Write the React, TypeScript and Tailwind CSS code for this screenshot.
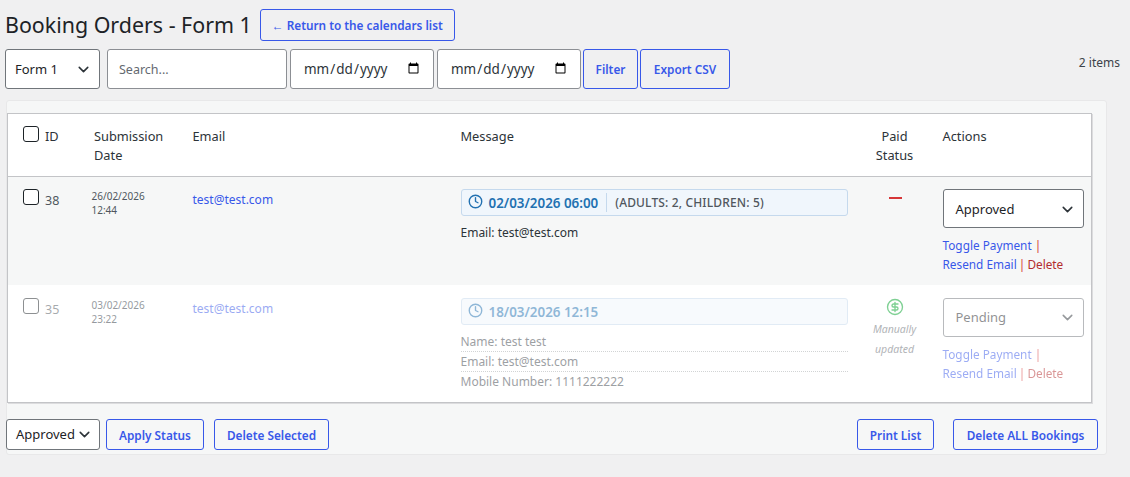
import { ChevronDown, CircleDollarSign, Clock } from "lucide-react";

const btn =
  "h-full flex items-center justify-center pt-[2px] border border-[#3858e9] rounded-[3px] text-[#3858e9] text-[11.8px] font-semibold bg-transparent";

function Select({ label, className }: { label: string; className: string }) {
  return (
    <div className={`flex items-center justify-between bg-white border border-[#70757a] rounded-[3px] text-[#1d2327] ${className}`}>
      <span className="pt-[1px]">{label}</span>
      <ChevronDown size={17} strokeWidth={2.2} className="text-[#2c3338]" />
    </div>
  );
}

function Links() {
  return (
    <div className="mt-[8px] text-[11.8px] leading-[19px] text-[#3858e9] whitespace-nowrap">
      <div>
        Toggle Payment <span className="text-[#d63638]">|</span>
      </div>
      <div>
        Resend Email <span className="text-[#d63638] -ml-[1px] -mr-[1px]">|</span>{" "}
        <span className="text-[#b32d2e]">Delete</span>
      </div>
    </div>
  );
}

function DateBadge({ date, extra }: { date: string; extra?: string }) {
  return (
    <div className="h-[27px] flex items-center border border-[#c5d9ed] bg-[#f0f6fc] rounded-[3px] pl-[6px]">
      <Clock size={15} strokeWidth={2.2} className="text-[#2271b1] -mt-[2px]" />
      <span className="ml-[6px] pt-[2px] text-[#2271b1] text-[13.4px] font-semibold">{date}</span>
      {extra && (
        <>
          <span className="ml-[8px] h-[19px] border-l border-[#c5d9ed]" />
          <span className="ml-[8px] text-[#50575e] text-[12px] font-medium tracking-[0.15px]">{extra}</span>
        </>
      )}
    </div>
  );
}

function Check() {
  return <span className="block w-[16px] h-[16px] shrink-0 bg-white border border-[#1d2327] rounded-[3px]" />;
}

export default function App() {
  return (
    <div className="w-[1130px] h-[477px] overflow-hidden bg-[#f0f0f1] text-[#2c3338] text-[12.8px] [font-family:'Noto_Sans','Open_Sans',sans-serif]">
      <div className="h-[49px] pl-[5px] flex items-center pt-[1px]">
        <h1 className="text-[21.4px] text-[#1d2327] font-normal whitespace-nowrap">Booking Orders - Form 1</h1>
        <a className={`${btn} ml-[8px] w-[195px] !h-[32px] bg-[#f6f7f7]`}>← Return to the calendars list</a>
      </div>

      <div className="h-[40px] flex pl-[5px] relative">
        <Select label="Form 1" className="w-[95px] pl-[9px] pr-[7px] mr-[7px] text-[13px]" />
        <input
          placeholder="Search..."
          className="w-[180px] h-full mr-[3px] pl-[11px] pt-[1px] bg-white border border-[#8c8f94] rounded-[3px] placeholder:text-[#646970] text-[12.5px]"
        />
        <input
          type="date"
          className="w-[144px] h-full mr-[3px] pl-[12px] pr-[11px] bg-white border border-[#8c8f94] rounded-[3px] text-[13.5px] text-[#2c3338]"
        />
        <input
          type="date"
          className="w-[144px] h-full mr-[2px] pl-[12px] pr-[11px] bg-white border border-[#8c8f94] rounded-[3px] text-[13.5px] text-[#2c3338]"
        />
        <button className={`${btn} w-[55px] mr-[2px]`}>Filter</button>
        <button className={`${btn} w-[90px]`}>Export CSV</button>
        <span className="ml-auto mr-[10px] mt-[5px] text-[12px] text-[#3c434a]">2 items</span>
      </div>

      <div className="mt-[11px] ml-[6px] w-[1101px] h-[355px] bg-[#f6f7f7] border border-[#e8e8e9] rounded-[3px] pt-[12px]">
        <table className="table-fixed w-[1085px] bg-white border border-[#c3c4c7] border-collapse shadow-[1px_1px_0_#dcdcde]">
          <colgroup>
            <col className="w-[78px]" />
            <col className="w-[99px]" />
            <col className="w-[268px]" />
            <col className="w-[402px]" />
            <col className="w-[80px]" />
            <col />
          </colgroup>
          <thead>
            <tr className="h-[63px] border-b border-[#c3c4c7] text-left align-top font-normal">
              <th className="font-normal pl-[15px] pt-[12px]">
                <div className="flex items-start gap-[6px]">
                  <Check />
                  <span className="leading-[19px] pt-[1px]">ID</span>
                </div>
              </th>
              <th className="font-normal pl-[8.5px] pt-[13px] leading-[19px]">Submission Date</th>
              <th className="font-normal pl-[8px] pt-[13px] leading-[19px]">Email</th>
              <th className="font-normal pl-[8px] pt-[13px] leading-[19px]">Message</th>
              <th className="font-normal pt-[13px] leading-[19px] text-center">
                Paid
                <br />
                Status
              </th>
              <th className="font-normal pl-[8px] pt-[13px] leading-[19px]">Actions</th>
            </tr>
          </thead>
          <tbody>
            <tr className="h-[108px] bg-[#f6f7f7] align-top">
              <td className="pl-[15px] pt-[12px]">
                <div className="flex items-start gap-[6px]">
                  <Check />
                  <span className="mt-[3px] text-[#50575e] leading-[17px] text-[12.5px]">38</span>
                </div>
              </td>
              <td className="pl-[6px] pt-[12px] text-[10px] leading-[14px] text-[#50575e]">
                26/02/2026
                <br />
                12:44
              </td>
              <td className="pl-[8px] pt-[13px] text-[#3858e9] leading-[19px] text-[12px]">test@test.com</td>
              <td className="pl-[8px] pr-[7px] pt-[12px]">
                <DateBadge date="02/03/2026 06:00" extra="(ADULTS: 2, CHILDREN: 5)" />
                <div className="mt-[7px] text-[12px] leading-[19px]">Email: test@test.com</div>
              </td>
              <td className="pt-[20px]">
                <div className="ml-[34px] w-[13px] h-[2px] bg-[#d63638]" />
              </td>
              <td className="pl-[8px] pt-[12px]">
                <Select label="Approved" className="w-[141px] h-[39px] pl-[12px] pr-[7px] pt-[1px] text-[13px]" />
                <Links />
              </td>
            </tr>
            <tr className="h-[118px] bg-white align-top">
              <td className="pl-[15px] pt-[13px]">
                <div className="flex items-start gap-[6px] opacity-50">
                  <Check />
                  <span className="mt-[3px] text-[#50575e] leading-[17px] text-[12.5px]">35</span>
                </div>
              </td>
              <td className="pl-[6px] pt-[13px] text-[10px] leading-[14px] text-[#50575e]">
                <div className="opacity-60">
                  03/02/2026
                  <br />
                  23:22
                </div>
              </td>
              <td className="pl-[8px] pt-[14px] text-[#3858e9] leading-[19px] text-[12px]">
                <div className="opacity-50">test@test.com</div>
              </td>
              <td className="pl-[8px] pr-[7px] pt-[13px]">
                <div className="opacity-50">
                  <DateBadge date="18/03/2026 12:15" />
                  <div className="mt-[7px] text-[12px] leading-[19px] text-[#3c434a]">
                    <div className="h-[20px] border-b border-dotted border-[#a7aaad]">Name: test test</div>
                    <div className="h-[20px] border-b border-dotted border-[#a7aaad]">Email: test@test.com</div>
                    <div className="h-[20px]">Mobile Number: 1111222222</div>
                  </div>
                </div>
              </td>
              <td className="pt-[13px]">
                <div className="opacity-50 flex flex-col items-center text-[10.5px] italic leading-[20px] text-[#646970]">
                  <CircleDollarSign size={18} strokeWidth={1.8} className="text-[#00a32a] mb-[3px]" />
                  <span>Manually</span>
                  <span>updated</span>
                </div>
              </td>
              <td className="pl-[8px] pt-[13px]">
                <div className="opacity-50">
                  <Select label="Pending" className="w-[141px] h-[39px] pl-[12px] pr-[7px] pt-[1px] text-[13px]" />
                  <Links />
                </div>
              </td>
            </tr>
          </tbody>
        </table>

        <div className="mt-[16px] -ml-[1px] h-[31px] flex text-[12px]">
          <Select label="Approved" className="w-[94px] pl-[9px] pr-[6px] mr-[6px] text-[13px]" />
          <button className={`${btn} w-[98px] mr-[10px]`}>Apply Status</button>
          <button className={`${btn} w-[115px]`}>Delete Selected</button>
          <button className={`${btn} w-[77px] ml-auto mr-[19px]`}>Print List</button>
          <button className={`${btn} w-[145px] mr-[8px]`}>Delete ALL Bookings</button>
        </div>
      </div>
    </div>
  );
}
